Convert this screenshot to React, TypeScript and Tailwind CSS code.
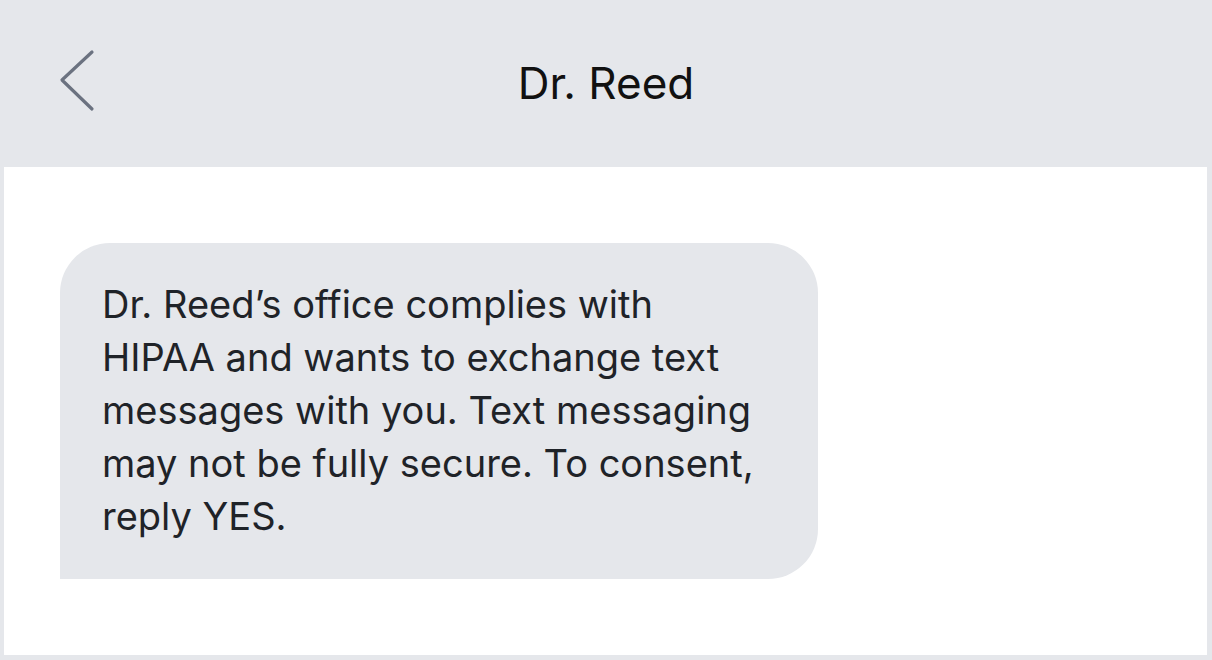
import React from 'react';

export default function App() {
  return (
    <div
      className="w-[1212px] h-[660px] bg-[#e5e7eb] flex flex-col overflow-hidden"
      style={{ fontFamily: 'Inter, "Liberation Sans", Arial, sans-serif' }}
    >
      {/* Header */}
      <div className="h-[167px] shrink-0 flex items-center relative">
        <button className="absolute left-[58px] top-[48px] p-0">
          <svg width="40" height="66" viewBox="0 0 40 66" fill="none">
            <path
              d="M34 4 L4 32 L34 61"
              stroke="#6b7280"
              strokeWidth="3.2"
              strokeLinecap="round"
              strokeLinejoin="round"
            />
          </svg>
        </button>
        <h1 className="w-full text-center text-[44px] leading-none text-[#111111] -mt-[2px]">Dr. Reed</h1>
      </div>

      {/* Messages */}
      <div className="flex-1 bg-white ml-[4px] mr-[5px] mb-[5px] pt-[76px] pl-[56px]">
        <div className="w-[758px] h-[336px] bg-[#e5e7eb] rounded-t-[50px] rounded-br-[50px] pl-[42px] pr-[20px] pt-[35px]">
          <p className="text-[38px] leading-[53px] text-[#1f2328] whitespace-nowrap">
            Dr. Reed’s office complies with
            <br />
            HIPAA and wants to exchange text
            <br />
            messages with you. Text messaging
            <br />
            may not be fully secure. To consent,
            <br />
            reply YES.
          </p>
        </div>
      </div>
    </div>
  );
}
